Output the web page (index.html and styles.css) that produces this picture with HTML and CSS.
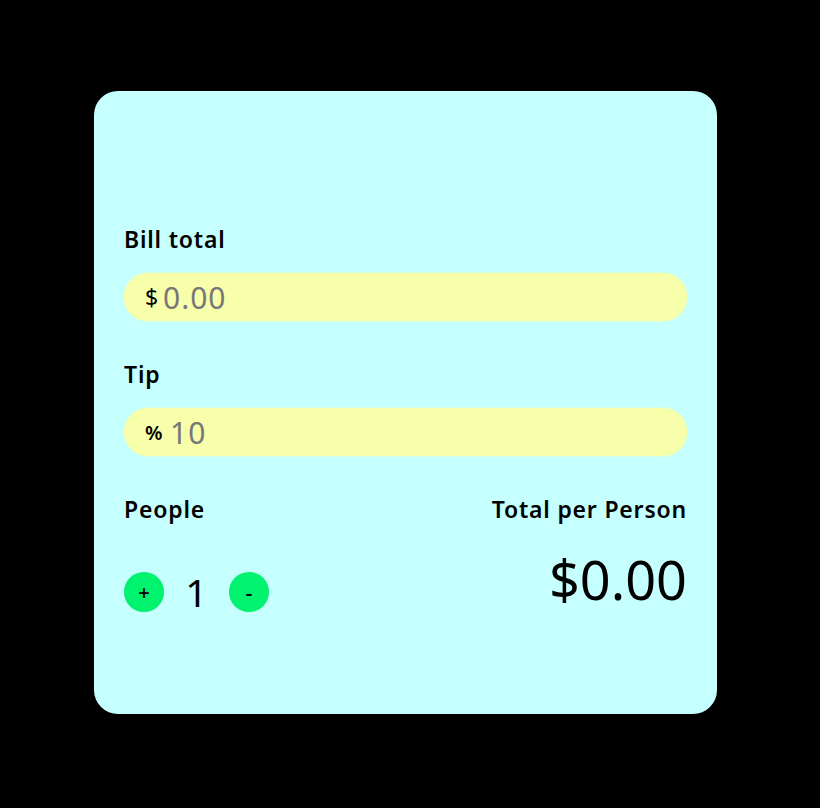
FILE: index.html
```html
<!DOCTYPE html>
<html>
<head>
<meta charset="utf-8">
<link rel="stylesheet" href="styles.css">
</head>
<body>
<main class="card">
  <div class="field">
    <label class="label">Bill total</label>
    <div class="input">
      <span class="prefix">$</span>
      <span class="value">0.00</span>
    </div>
  </div>
  <div class="field">
    <label class="label">Tip</label>
    <div class="input">
      <span class="prefix pct">%</span>
      <span class="value">10</span>
    </div>
  </div>
  <div class="bottom">
    <div class="col">
      <div class="label">People</div>
      <div class="counter">
        <button class="btn">+</button>
        <span class="count">1</span>
        <button class="btn">-</button>
      </div>
    </div>
    <div class="col right">
      <div class="label">Total per Person</div>
      <div class="total">$0.00</div>
    </div>
  </div>
</main>
</body>
</html>
```
FILE: styles.css
```css
html, body {
  margin: 0;
  background: #000;
}
body {
  padding: 91px 0 0 94px;
  height: 808px;
  box-sizing: border-box;
  font-family: "Noto Sans", "Open Sans", sans-serif;
}
.card {
  width: 623px;
  height: 623px;
  box-sizing: border-box;
  background: #c5fffe;
  border-radius: 24px;
  padding: 132px 30px 0 30px;
  display: flex;
  flex-direction: column;
}
.field {
  display: flex;
  flex-direction: column;
  margin-bottom: 37px;
}
.label {
  font-size: 23px;
  font-weight: 600;
  letter-spacing: 0.8px;
  color: #000;
  line-height: 32px;
}
.input {
  margin-top: 18px;
  height: 48px;
  background: #f8ffaa;
  border-radius: 24px;
  display: flex;
  align-items: center;
  padding-left: 21px;
  box-shadow: 0 0 2px #f8ffaa;
}
.prefix {
  font-size: 23px;
  color: #000;
  width: 18px;
}
.prefix.pct {
  font-weight: 600;
  font-size: 20px;
  width: 25px;
}
.value {
  font-size: 30px;
  letter-spacing: 1px;
  color: #777;
}
.bottom {
  display: flex;
  justify-content: space-between;
}
.col {
  display: flex;
  flex-direction: column;
}
.col.right {
  align-items: flex-end;
}
.counter {
  display: flex;
  align-items: center;
  margin-top: 47px;
}
.btn {
  width: 40px;
  height: 40px;
  border-radius: 50%;
  border: none;
  background: #00f26e;
  font-family: "Noto Sans", sans-serif;
  font-size: 20px;
  font-weight: 600;
  color: #000;
  padding: 0;
  display: flex;
  align-items: center;
  justify-content: center;
}
.count {
  font-size: 39px;
  width: 65px;
  text-align: center;
  line-height: 40px;
}
.total {
  font-size: 54px;
  line-height: 60px;
  margin-top: 24px;
}
```
